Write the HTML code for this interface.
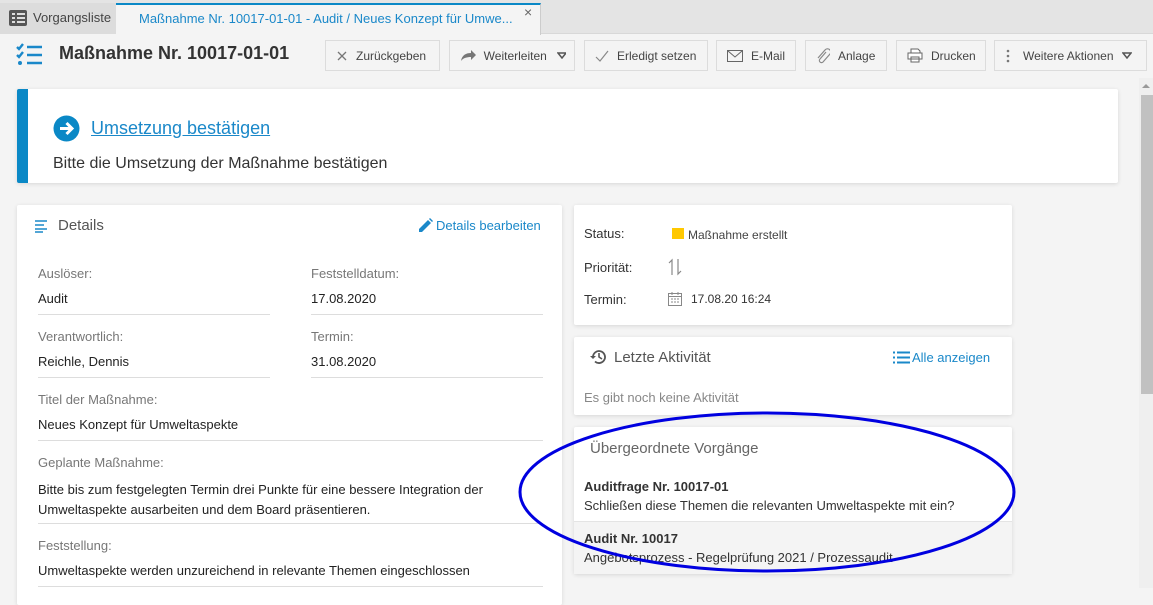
<!DOCTYPE html>
<html><head><meta charset="utf-8"><style>
*{box-sizing:border-box;margin:0;padding:0}
body{width:1153px;height:588px;overflow:hidden;background:#f4f4f4;font-family:"Liberation Sans",Arial,sans-serif;position:relative;color:#333}
.a{position:absolute}
.tabbar{left:0;top:0;width:1153px;height:34px;background:#e4e4e4;border-bottom:1px solid #d8d8d8}
.btn{position:absolute;top:40px;height:31px;border:1px solid #dcdcdc;background:#f4f4f4;font-size:12px;color:#444;display:flex;align-items:center;padding-left:10px}
.btn svg{margin-right:8px}
.card{position:absolute;background:#fff;box-shadow:0 1px 4px rgba(0,0,0,.12);border-radius:2px}
.lbl{position:absolute;font-size:13px;color:#777}
.val{position:absolute;font-size:13px;color:#222}
.hr{position:absolute;height:1px;background:#ddd}
</style></head><body>
<div class="a tabbar"></div>
<div class="a" style="left:0;top:3px;width:126px;height:31px;background:#dcdcdc;border-right:1px solid #ccc"></div>
<div class="a" style="left:9px;top:10px;width:18px;height:16px;background:#555;border-radius:2px"></div>
<div class="a" style="left:12px;top:13px;width:3px;height:2px;background:#ddd;box-shadow:0 4px 0 #ddd,0 8px 0 #ddd"></div>
<div class="a" style="left:17px;top:13px;width:8px;height:2px;background:#ddd;box-shadow:0 4px 0 #ddd,0 8px 0 #ddd"></div>
<div class="a" style="left:33px;top:10px;font-size:13px;color:#444">Vorgangsliste</div>
<div class="a" style="left:116px;top:3px;width:425px;height:32px;background:#f4f4f4;border-top:2px solid #0a88c6;border-right:1px solid #ccc"></div>
<div class="a" style="left:139px;top:11px;font-size:13px;color:#1a88c9">Maßnahme Nr. 10017-01-01 - Audit / Neues Konzept für Umwe...</div>
<div class="a" style="left:524px;top:4px;font-size:14px;color:#666">×</div>

<svg class="a" style="left:16px;top:43px" width="28" height="24" viewBox="0 0 28 24"><g stroke="#1a88c9" stroke-width="2.4" fill="none"><path d="M1 4l2 2 4-5M1 12l2 2 4-5"/><path d="M11 4h15M11 12h15M11 20h15"/></g><circle cx="4" cy="20" r="2" fill="#1a88c9"/></svg>
<div class="a" style="left:59px;top:43px;font-size:18px;font-weight:bold;color:#333">Maßnahme Nr. 10017-01-01</div>

<div class="btn" style="left:325px;width:115px"><svg width="12" height="12"><path d="M2 2l8 8M10 2l-8 8" stroke="#777" stroke-width="1.3"/></svg>Zurückgeben</div>
<div class="btn" style="left:449px;width:126px"><svg width="17" height="13"><path d="M1 12c1-6 5-8 10-8V1l5 5-5 5V8C7 8 3 9 1 12z" fill="#777"/></svg>Weiterleiten<svg style="margin-left:10px" width="10" height="7"><path d="M1 1h8L5 6z" fill="none" stroke="#555" stroke-width="1.5"/></svg></div>
<div class="btn" style="left:584px;width:124px"><svg width="14" height="12"><path d="M1 7l4 4 8-10" stroke="#888" stroke-width="1.2" fill="none"/></svg>Erledigt setzen</div>
<div class="btn" style="left:716px;width:80px"><svg width="16" height="12"><rect x=".5" y=".5" width="15" height="11" fill="none" stroke="#666"/><path d="M1 1l7 6 7-6" fill="none" stroke="#666"/></svg>E-Mail</div>
<div class="btn" style="left:805px;width:82px"><svg width="14" height="16"><path d="M10 4L4 11a2 2 0 003 3l7-8a3 3 0 00-5-4L2 10" fill="none" stroke="#888" stroke-width="1.2"/></svg>Anlage</div>
<div class="btn" style="left:896px;width:90px"><svg width="16" height="15"><path d="M4 5V1h7l2 2v2M1 5h14v6H1zM4 9h8v5H4z" fill="#fff" stroke="#666"/></svg>Drucken</div>
<div class="btn" style="left:994px;width:153px"><svg width="6" height="14"><circle cx="3" cy="2" r="1.3" fill="#777"/><circle cx="3" cy="7" r="1.3" fill="#777"/><circle cx="3" cy="12" r="1.3" fill="#777"/></svg><span style="margin-left:4px">Weitere Aktionen</span><svg style="margin-left:8px" width="10" height="7"><path d="M1 1h8L5 6z" fill="none" stroke="#555" stroke-width="1.5"/></svg></div>

<!-- scrollbar -->
<div class="a" style="left:1139px;top:78px;width:14px;height:510px;background:#efefef"></div>
<div class="a" style="left:1142px;top:84px;width:0;height:0;border-left:4px solid transparent;border-right:4px solid transparent;border-bottom:4px solid #999"></div>
<div class="a" style="left:1141px;top:95px;width:12px;height:299px;background:#c1c1c1"></div>

<div class="card" style="left:17px;top:89px;width:1101px;height:94px;border-left:11px solid #0a88c6"></div>
<svg class="a" style="left:53px;top:115px" width="27" height="27"><circle cx="13.5" cy="13.5" r="13" fill="#0a88c6"/><path d="M7 13.5h12M13.5 8l5.5 5.5-5.5 5.5" stroke="#fff" stroke-width="3" fill="none"/></svg>
<div class="a" style="left:91px;top:118px;font-size:18px;color:#1a88c9;text-decoration:underline">Umsetzung bestätigen</div>
<div class="a" style="left:53px;top:155px;font-size:16px;color:#333">Bitte die Umsetzung der Maßnahme bestätigen</div>

<div class="card" style="left:17px;top:205px;width:545px;height:400px"></div>
<svg class="a" style="left:35px;top:220px" width="14" height="13"><path d="M0 1h12M0 5h9M0 9h12M0 12h8" stroke="#1a88c9" stroke-width="1.6"/></svg>
<div class="a" style="left:58px;top:217px;font-size:15px;color:#555">Details</div>
<svg class="a" style="left:417px;top:217px" width="16" height="17"><path d="M2 12l9-9 3 3-9 9H2z" fill="#1a88c9"/><path d="M12 2l1-1 3 3-1 1z" fill="#1a88c9"/></svg>
<div class="a" style="left:436px;top:218px;font-size:13px;color:#1a88c9">Details bearbeiten</div>

<div class="lbl" style="left:38px;top:266px">Auslöser:</div><div class="val" style="left:38px;top:291px">Audit</div><div class="hr" style="left:38px;top:314px;width:232px"></div>
<div class="lbl" style="left:311px;top:266px">Feststelldatum:</div><div class="val" style="left:311px;top:291px">17.08.2020</div><div class="hr" style="left:311px;top:314px;width:232px"></div>
<div class="lbl" style="left:38px;top:329px">Verantwortlich:</div><div class="val" style="left:38px;top:354px">Reichle, Dennis</div><div class="hr" style="left:38px;top:377px;width:232px"></div>
<div class="lbl" style="left:311px;top:329px">Termin:</div><div class="val" style="left:311px;top:354px">31.08.2020</div><div class="hr" style="left:311px;top:377px;width:232px"></div>
<div class="lbl" style="left:38px;top:392px">Titel der Maßnahme:</div><div class="val" style="left:38px;top:417px">Neues Konzept für Umweltaspekte</div><div class="hr" style="left:38px;top:440px;width:505px"></div>
<div class="lbl" style="left:38px;top:455px">Geplante Maßnahme:</div><div class="val" style="left:38px;top:480px;line-height:20px">Bitte bis zum festgelegten Termin drei Punkte für eine bessere Integration der<br>Umweltaspekte ausarbeiten und dem Board präsentieren.</div><div class="hr" style="left:38px;top:523px;width:505px"></div>
<div class="lbl" style="left:38px;top:538px">Feststellung:</div><div class="val" style="left:38px;top:563px">Umweltaspekte werden unzureichend in relevante Themen eingeschlossen</div><div class="hr" style="left:38px;top:586px;width:505px"></div>

<div class="card" style="left:574px;top:205px;width:438px;height:120px"></div>
<div class="val" style="left:584px;top:226px;color:#333">Status:</div>
<div class="a" style="left:672px;top:228px;width:12px;height:11px;background:#ffc800"></div>
<div class="a" style="left:688px;top:228px;font-size:12px;color:#444">Maßnahme erstellt</div>
<div class="val" style="left:584px;top:260px;color:#333">Priorität:</div>
<svg class="a" style="left:668px;top:258px" width="14" height="18"><path d="M4 17V2L1 5M10 1v15l3-3" stroke="#888" fill="none" stroke-width="1.2"/></svg>
<div class="val" style="left:584px;top:292px;color:#333">Termin:</div>
<svg class="a" style="left:668px;top:291px" width="14" height="15"><rect x=".5" y="2.5" width="13" height="12" fill="none" stroke="#888"/><path d="M1 5.5h12M4 1v3M10 1v3" stroke="#888"/><path d="M3 8h2M6 8h2M9 8h2M3 11h2M6 11h2M9 11h2" stroke="#888"/></svg>
<div class="a" style="left:691px;top:292px;font-size:12px;color:#333">17.08.20 16:24</div>

<div class="card" style="left:574px;top:337px;width:438px;height:78px"></div>
<svg class="a" style="left:590px;top:349px" width="17" height="16"><path d="M3 8a6 6 0 1 1 2 4.5" stroke="#555" stroke-width="1.8" fill="none"/><path d="M0 7l3 3 3-3z" fill="#555"/><path d="M9 4v4l3 2" stroke="#555" stroke-width="1.6" fill="none"/></svg>
<div class="a" style="left:614px;top:349px;font-size:15px;color:#555">Letzte Aktivität</div>
<svg class="a" style="left:893px;top:351px" width="17" height="13"><path d="M0 1.5h2M0 6.5h2M0 11.5h2M4 1.5h13M4 6.5h13M4 11.5h13" stroke="#1a88c9" stroke-width="2"/></svg>
<div class="a" style="left:912px;top:350px;font-size:13px;color:#1a88c9">Alle anzeigen</div>
<div class="a" style="left:584px;top:390px;font-size:13px;color:#888">Es gibt noch keine Aktivität</div>

<div class="card" style="left:574px;top:427px;width:438px;height:147px"></div>
<div class="a" style="left:590px;top:440px;font-size:15px;color:#666">Übergeordnete Vorgänge</div>
<div class="a" style="left:584px;top:479px;font-size:13px;font-weight:bold;color:#333">Auditfrage Nr. 10017-01</div>
<div class="a" style="left:584px;top:498px;font-size:13px;color:#333">Schließen diese Themen die relevanten Umweltaspekte mit ein?</div>
<div class="a" style="left:574px;top:521px;width:438px;height:53px;background:#f4f4f4;border-top:1px solid #e4e4e4"></div>
<div class="a" style="left:584px;top:531px;font-size:13px;font-weight:bold;color:#333">Audit Nr. 10017</div>
<div class="a" style="left:584px;top:550px;font-size:13px;color:#333">Angebotsprozess - Regelprüfung 2021 / Prozessaudit</div>

<svg class="a" style="left:517px;top:405px" width="500" height="183"><ellipse cx="250" cy="87" rx="247" ry="79" fill="none" stroke="#0000e0" stroke-width="3"/></svg>
</body></html>
